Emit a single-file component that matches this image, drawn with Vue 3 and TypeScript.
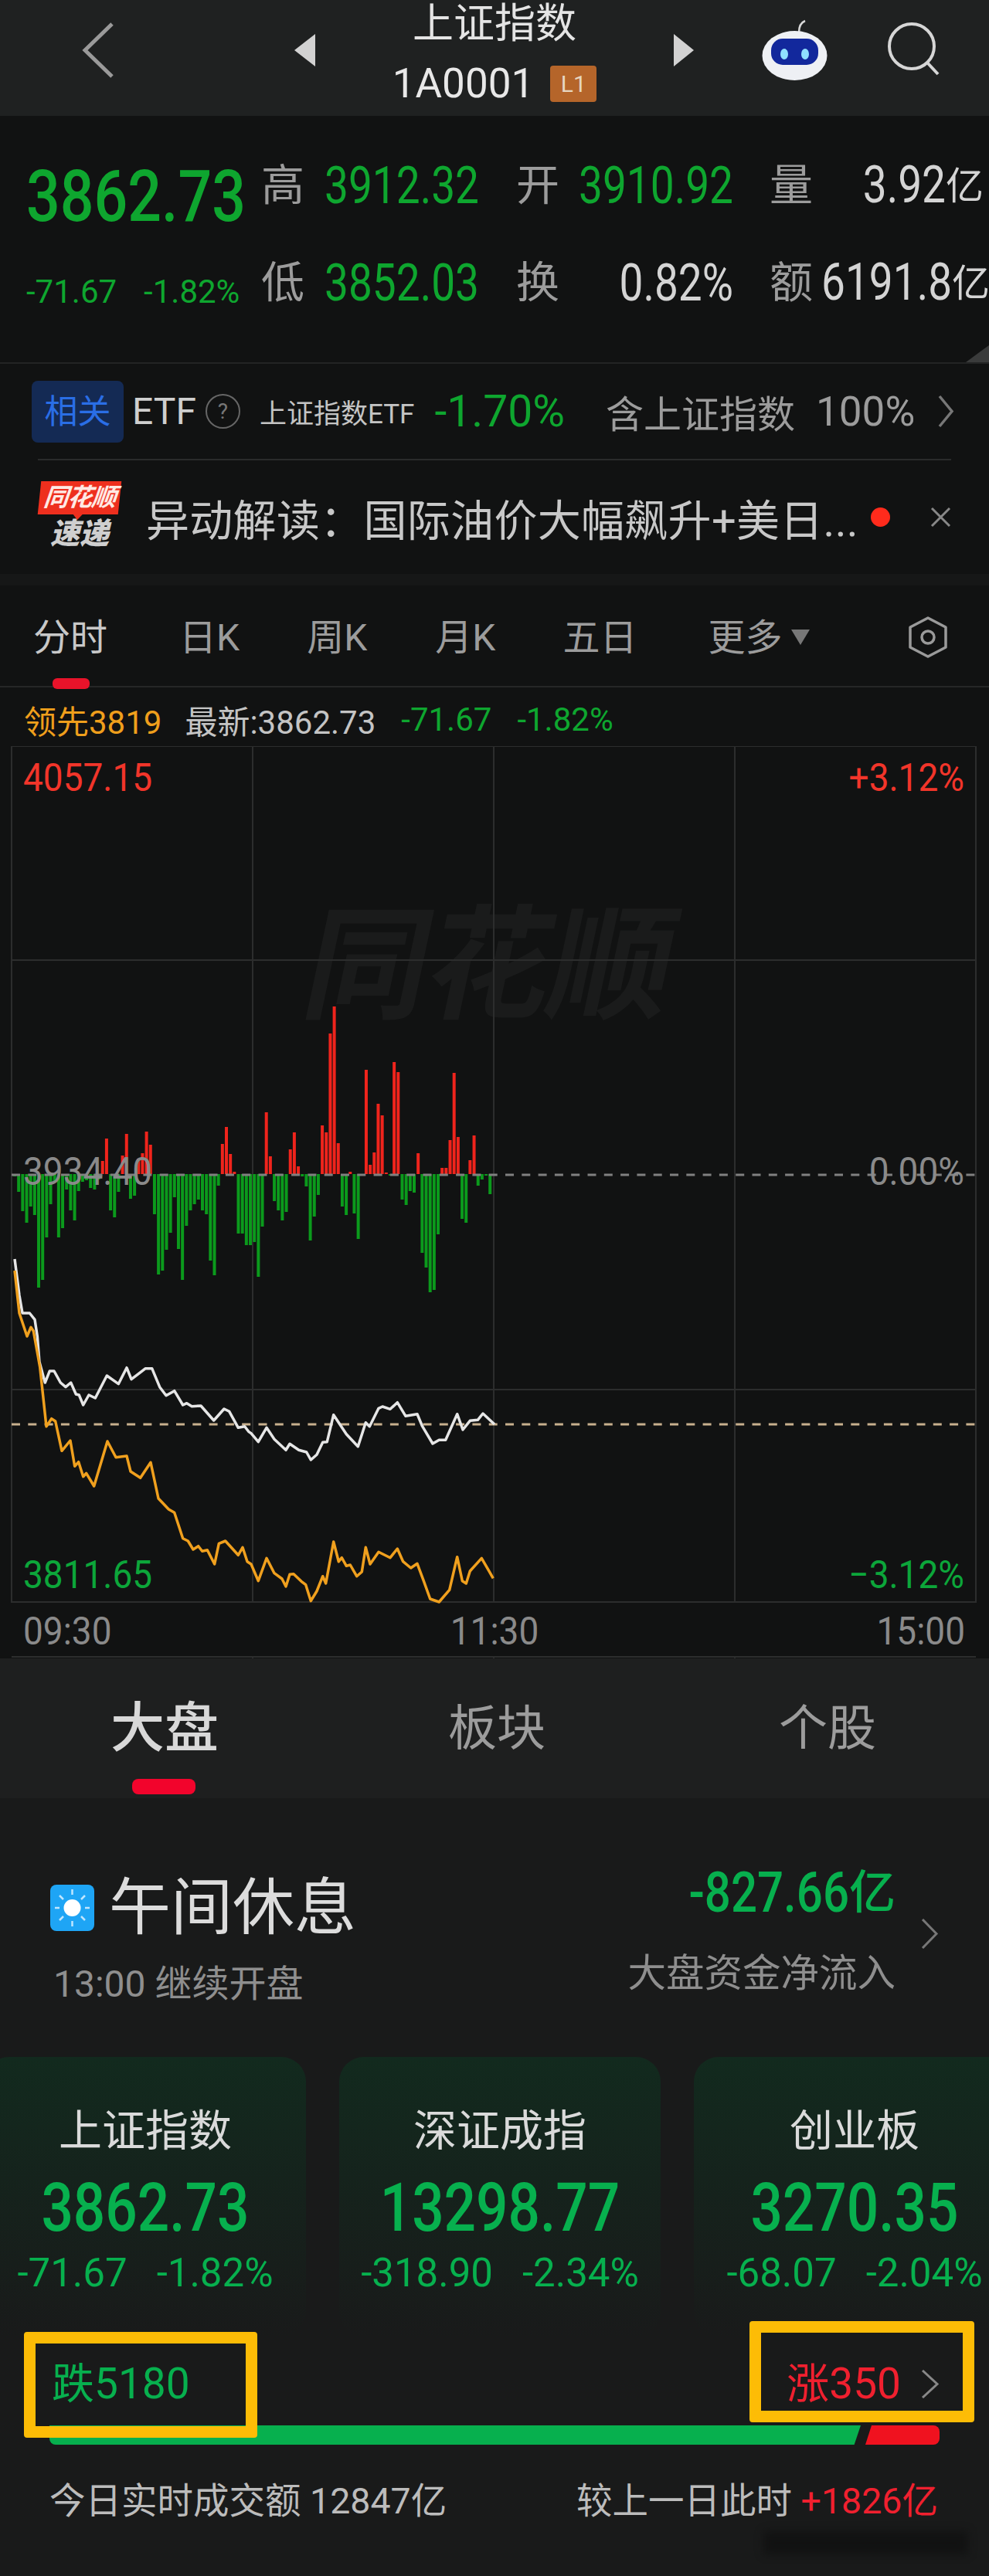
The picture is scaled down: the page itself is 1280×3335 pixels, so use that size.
<template>
  <div class="page">
    <!-- 顶部导航 -->
    <header class="nav">
      <svg class="nav-back" viewBox="0 0 43 74"><path d="M39 3 4 37l35 34" fill="none" stroke="#9a9a9a" stroke-width="5" /></svg>
      <i class="tri tri-left"></i>
      <div class="nav-title">
        <div class="nav-name">上证指数</div>
        <div class="nav-code"><span class="code-text">1A0001</span><span class="level">L1</span></div>
      </div>
      <i class="tri tri-right"></i>
      <svg class="nav-robot" viewBox="0 0 89 82">
        <path d="M50 20c0-8 3-13 8-15" fill="none" stroke="#d8d8d8" stroke-width="2.500" />
        <ellipse cx="44.500" cy="50" rx="42" ry="32" fill="#eef0f4" />
        <rect x="14" y="28" width="61" height="34" rx="15" fill="#12289c" />
        <ellipse cx="31" cy="48" rx="5" ry="7" fill="#8fe0ff" />
        <ellipse cx="58" cy="48" rx="5" ry="7" fill="#8fe0ff" />
      </svg>
      <svg class="nav-search" viewBox="0 0 70 70"><circle cx="33" cy="32" r="29" fill="none" stroke="#d6d6d6" stroke-width="4" /><path d="m53 53 14 15" stroke="#d6d6d6" stroke-width="4" /></svg>
    </header>

    <!-- 行情数据 -->
    <section class="quote">
      <div class="quote-grid">
        <div class="price"><span class="num">3862.73</span></div>
        <div class="q-label">高</div><div class="q-val green"><span class="num">3912.32</span></div>
        <div class="q-label">开</div><div class="q-val green"><span class="num">3910.92</span></div>
        <div class="q-label">量</div><div class="q-val light end"><span class="num">3.92</span><span class="yi">亿</span></div>
        <div class="change"><span>-71.67</span><span>-1.82%</span></div>
        <div class="q-label">低</div><div class="q-val green"><span class="num">3852.03</span></div>
        <div class="q-label">换</div><div class="q-val light turn"><span class="num">0.82%</span></div>
        <div class="q-label">额</div><div class="q-val light end"><span class="num">6191.8</span><span class="yi">亿</span></div>
      </div>
      <i class="corner"></i>
    </section>

    <div class="etf">
      <span class="etf-tag">相关</span>
      <span class="etf-name">ETF</span>
      <span class="etf-help">?</span>
      <span class="etf-fund">上证指数ETF</span>
      <span class="etf-rate">-1.70%</span>
      <span class="etf-hold">含上证指数</span>
      <span class="etf-pct">100%</span>
      <svg class="etf-more" viewBox="0 0 22 43"><path d="m3 2 16 19.500L3 41" fill="none" stroke="#777" stroke-width="3.500" /></svg>
    </div>
    <div class="hr"></div>

    <div class="news">
      <div class="logo">
        <div class="logo-top"><span>同花顺</span></div>
        <div class="logo-bottom">速递</div>
      </div>
      <div class="news-text">异动解读：国际油价大幅飙升+美日...</div>
      <i class="news-dot"></i>
      <svg class="news-close" viewBox="0 0 27 27"><path d="m2 2 23 23M25 2 2 25" stroke="#888" stroke-width="3" /></svg>
    </div>
    <div class="band"></div>

    <!-- 周期切换 -->
    <nav class="periods">
      <div class="period period-on">分时<i class="period-bar"></i></div>
      <div class="period p2">日K</div>
      <div class="period p3">周K</div>
      <div class="period p4">月K</div>
      <div class="period p5">五日</div>
      <div class="period p6">更多</div>
      <i class="period-tri"></i>
      <svg class="period-set" viewBox="0 0 54 54"><path d="M27 2 50 14v26L27 52 4 40V14Z" fill="none" stroke="#9a9a9a" stroke-width="3.500" stroke-linejoin="round" /><circle cx="27" cy="27" r="8" fill="none" stroke="#9a9a9a" stroke-width="3.500" /></svg>
    </nav>

    <div class="summary">
      <span class="s-lead">领先3819</span>
      <span class="s-last">最新:3862.73</span>
      <span class="s-chg">-71.67</span>
      <span class="s-pct">-1.82%</span>
    </div>

    <!-- 分时图，坐标直接用整页坐标 -->
    <svg class="chart" viewBox="0 966 1280 1181">
      <text class="mark" x="393" y="1306" textLength="475" transform="translate(271 0) skewX(-12)">同花顺</text>
      <g stroke="#2c2d2d" stroke-width="2" fill="none">
        <path d="M15 966H1263V2074H15Z" />
        <path d="M15 1243H1263M15 1799H1263M327 966V2074M639 966V2074M951 966V2074" />
        <path d="M15 2145H1263M327 2145V2147M639 2145V2147M951 2145V2147" />
      </g>
      <rect
        v-for="(b, i) in bars"
        :key="i"
        :x="b.x"
        :y="b.y"
        width="4"
        :height="b.h"
        :fill="b.up ? '#f0241c' : '#0b9a1c'"
      />
      <path d="M15 1521H1263" stroke="#808080" stroke-width="3" stroke-dasharray="11 10.300" />
      <path d="M15 1844H1263" stroke="#c8b08e" stroke-width="3" stroke-dasharray="11 10.300" />
      <polyline :points="whiteLine" fill="none" stroke="#e6e6e6" stroke-width="3.500" stroke-linejoin="round" />
      <polyline :points="orangeLine" fill="none" stroke="#f0a01e" stroke-width="3.500" stroke-linejoin="round" />
      <text class="axis red" x="30" y="1023">4057.15</text>
      <text class="axis red" x="1248" y="1023" text-anchor="end">+3.12%</text>
      <text class="axis gray" x="30" y="1533">3934.40</text>
      <text class="axis gray" x="1248" y="1533" text-anchor="end">0.00%</text>
      <text class="axis green" x="30" y="2055">3811.65</text>
      <text class="axis green" x="1248" y="2055" text-anchor="end">−3.12%</text>
      <text class="axis gray" x="30" y="2128">09:30</text>
      <text class="axis gray" x="640" y="2128" text-anchor="middle">11:30</text>
      <text class="axis gray" x="1249" y="2128" text-anchor="end">15:00</text>
    </svg>

    <!-- 大盘/板块/个股 -->
    <nav class="board-tabs">
      <div class="board-tab board-on">大盘<i class="board-bar"></i></div>
      <div class="board-tab b2">板块</div>
      <div class="board-tab b3">个股</div>
    </nav>

    <section class="market">
      <div class="status">
        <div>
          <div class="status-main">
            <svg class="sun" viewBox="0 0 57 60">
              <rect width="57" height="60" rx="8" fill="#1ea5f5" />
              <circle cx="28.500" cy="30" r="11" fill="#fff" />
              <path d="M28.500 6v7M28.500 47v7M6 30h6M45 30h6M12 14l5 5M40 41l5 5M45 14l-5 5M17 41l-5 5" stroke="#bfe6ff" stroke-width="2.500" />
            </svg>
            <span class="status-title">午间休息</span>
          </div>
          <div class="status-sub">13:00 继续开盘</div>
        </div>
        <div class="flow">
          <div class="flow-text">
            <div class="flow-num"><span class="num">-827.66</span>亿</div>
            <div class="flow-label">大盘资金净流入</div>
          </div>
          <svg class="flow-more" viewBox="0 0 23 39"><path d="m2 1 18 18.500L2 38" fill="none" stroke="#777" stroke-width="3" /></svg>
        </div>
      </div>

      <div class="cards">
        <div v-for="c in cards" :key="c.name" class="card">
          <div class="card-name">{{ c.name }}</div>
          <div class="card-val"><span class="num">{{ c.value }}</span></div>
          <div class="card-sub"><span>{{ c.change }}</span><span>{{ c.rate }}</span></div>
        </div>
      </div>

      <div class="breadth">
        <div class="breadth-row">
          <span class="fall">跌5180</span>
          <span class="rise">涨350<svg class="rise-more" viewBox="0 0 24 37"><path d="m2 1 19 17.500L2 36" fill="none" stroke="#888" stroke-width="3" /></svg></span>
        </div>
        <div class="bar">
          <i class="bar-green"></i>
          <i class="bar-red"></i>
        </div>
        <i class="hl hl-left"></i>
        <i class="hl hl-right"></i>
      </div>

      <div class="turnover">
        <span>今日实时成交额 12847亿</span>
        <span>较上一日此时 <b>+1826亿</b></span>
      </div>
      <i class="smudge"></i>
    </section>
  </div>
</template>

<script setup lang="ts">
interface Card {
  name: string
  value: string
  change: string
  rate: string
}

const cards: Card[] = [
  { name: '上证指数', value: '3862.73', change: '-71.67', rate: '-1.82%' },
  { name: '深证成指', value: '13298.77', change: '-318.90', rate: '-2.34%' },
  { name: '创业板', value: '3270.35', change: '-68.07', rate: '-2.04%' }
]

// 每分钟一根量柱，正数红负数绿
const flow: number[] = [
  -3, -23, -48, -63, -42, -53, -147, -137, -82, -39, -10, -82, -70, -20, -47, -60, -22, -10, -8, -18, -20,
  -7, 17, 46, -47, -56, -23, 24, 52, -32, -28, 20, 27, 55, 38, -52, -130, -125, -98, -76, -30, -97, -137,
  -67, -47, -39, -33, -47, -52, -112, -131, -15, 39, 61, 26, 3, -77, -77, -92, -92, -88, -133, -68, 80, 23,
  -35, -47, -60, -49, 32, 54, 10, -3, -16, -86, -55, -27, 63, 54, 182, 217, 40, -42, -53, 3, -51, -84, -2,
  135, 12, 28, 91, 76, 2, -2, 145, 132, -33, -40, -22, -24, 27, -102, -121, -153, -150, -78, 8, 8, 44, 131,
  48, -58, -63, 18, 50, -15, -7, -2, -26, -2
]

const ZERO_Y = 1520

const bars = flow.map((v, i) => ({
  x: 17 + 5.170 * i,
  y: v > 0 ? ZERO_Y - v : ZERO_Y,
  h: Math.abs(v),
  up: v > 0
}))

// 取点时的裁剪坐标是 3 倍，这里换算回整页坐标
function toPoints(pts: number[][], offsetX: number): string {
  return pts.map(([x, y]) => `${(offsetX + x / 3).toFixed(1)},${(1620 + y / 3).toFixed(1)}`).join(' ')
}

const whiteA = [[12,30],[30,170],[42,240],[70,240],[90,265],[100,330],[108,430],[130,510],[148,465],[165,465],[190,510],[210,527],[230,510],[250,555],[262,558],[278,597],[300,558],[325,570],[370,483],[415,515],[447,452],[465,497],[520,455],[545,455],[575,527],[600,560],[632,542],[665,597],[680,590],[700,602],[735,600],[785,657],[825,612],[845,622],[880,685],[905,680]]
const whiteB = [[-10,700],[0,707],[28,740],[60,685],[90,730],[135,772],[150,748],[185,772],[215,780],[232,810],[255,790],[278,742],[295,740],[320,635],[370,710],[415,758],[445,665],[460,680],[495,610],[510,603],[540,613],[568,587],[600,640],[645,632],[665,680],[705,747],[730,733],[755,733],[800,632],[822,693],[850,658],[880,655],[900,630],[945,672]]
const orangeA = [[12,75],[30,240],[60,330],[75,295],[85,310],[110,450],[135,680],[155,650],[170,660],[195,775],[228,735],[245,835],[260,818],[278,875],[290,862],[320,912],[372,738],[405,800],[447,795],[462,855],[500,880],[540,820],[570,960],[610,1002],[632,1015],[665,1115],[685,1125],[705,1158],[725,1145],[740,1165],[760,1160],[788,1215],[805,1135],[830,1125],[880,1180],[897,1150],[915,1205]]
const orangeB = [[0,1215],[28,1280],[60,1192],[90,1250],[120,1272],[135,1302],[150,1255],[165,1253],[195,1282],[212,1295],[232,1358],[255,1320],[278,1262],[290,1290],[320,1128],[340,1205],[352,1190],[370,1222],[385,1218],[410,1262],[430,1245],[445,1150],[462,1215],[495,1168],[540,1190],[568,1155],[590,1205],[620,1230],[645,1213],[670,1280],[695,1350],[730,1362],[770,1315],[800,1187],[820,1280],[835,1290],[850,1242],[895,1192],[940,1270]]

const whiteLine = `${toPoints(whiteA, 15)} ${toPoints(whiteB, 325)}`
const orangeLine = `${toPoints(orangeA, 15)} ${toPoints(orangeB, 325)}`
</script>

<style>
body {
  background: #191a1a;
}
</style>

<style scoped>
.page {
  width: 1280px;
  height: 3335px;
  overflow: hidden;
  background: #111212;
  font-family: Roboto, "Noto Sans CJK SC", sans-serif;
  color: #ddd;
}

.num {
  display: inline-block;
  transform: scaleY(1.2);
}

.green {
  color: #0ea62f;
}

.light {
  color: #d4d4d4;
}

/* 顶部导航 */
.nav {
  height: 150px;
  background: #1f2121;
  display: flex;
  align-items: center;
}

.nav-back {
  width: 43px;
  height: 74px;
  margin-left: 106px;
  margin-top: -20px;
}

.tri {
  width: 0;
  height: 0;
  margin-top: -20px;
  border-top: 21px solid transparent;
  border-bottom: 21px solid transparent;
}

.tri-left {
  margin-left: 232px;
  border-right: 27px solid #d2d2d2;
}

.tri-right {
  border-left: 26px solid #d2d2d2;
}

.nav-title {
  width: 464px;
  height: 150px;
  display: flex;
  flex-direction: column;
  align-items: center;
}

.nav-name {
  font-size: 53px;
  line-height: 62px;
  color: #e4e4e4;
}

.nav-code {
  display: flex;
  align-items: center;
  gap: 21px;
  margin-top: 22px;
  height: 48px;
}

.code-text {
  font-size: 53px;
  color: #e8e8e8;
}

.level {
  width: 60px;
  height: 47px;
  border-radius: 4px;
  background: #b5652a;
  color: #e6d6c0;
  font-size: 30px;
  line-height: 47px;
  text-align: center;
}

.nav-robot {
  width: 89px;
  height: 82px;
  margin-left: 86px;
  margin-top: -24px;
}

.nav-search {
  width: 70px;
  height: 70px;
  margin-left: 74px;
  margin-top: -24px;
}

/* 行情数据 */
.quote {
  position: relative;
  height: 321px;
  border-bottom: 2px solid #232424;
  box-sizing: border-box;
}

.quote-grid {
  display: grid;
  grid-template-columns: 304px 82px 248px 81px 247px 67px 210px;
  grid-auto-rows: 100px;
  row-gap: 26px;
  padding: 40px 0 0 34px;
  align-items: center;
}

.price {
  font-size: 77px;
  font-weight: 500;
  color: #0ea62f;
  line-height: 1;
  margin-top: 30px;
}

.q-label {
  font-size: 56px;
  line-height: 64px;
  color: #9c9c9c;
}

.q-val {
  font-size: 55px;
  line-height: 64px;
  white-space: nowrap;
}

.end {
  text-align: right;
}

.turn {
  text-align: right;
  padding-right: 47px;
}

.yi {
  font-size: 49px;
}

.change {
  display: flex;
  gap: 35px;
  color: #0ea62f;
  font-size: 42px;
  margin-top: 22px;
}

.corner {
  position: absolute;
  right: 0;
  bottom: 0;
  width: 0;
  height: 0;
  border-left: 30px solid transparent;
  border-bottom: 22px solid #3a3b3b;
}

/* ETF */
.etf {
  height: 123px;
  display: flex;
  align-items: center;
  padding-left: 41px;
}

.etf-tag {
  width: 119px;
  height: 80px;
  border-radius: 8px;
  background: #142a54;
  color: #2a6ee6;
  font-size: 43px;
  line-height: 80px;
  text-align: center;
}

.etf-name {
  margin-left: 11px;
  font-size: 48px;
  color: #cfcfcf;
}

.etf-help {
  width: 41px;
  height: 41px;
  margin-left: 12px;
  border: 2px solid #666;
  border-radius: 50%;
  color: #777;
  font-size: 28px;
  line-height: 41px;
  text-align: center;
}

.etf-fund {
  margin-left: 25px;
  font-size: 35px;
  color: #c4c4c4;
  white-space: nowrap;
}

.etf-rate {
  margin-left: 26px;
  font-size: 57px;
  color: #0ea62f;
}

.etf-hold {
  margin-left: 53px;
  font-size: 49px;
  color: #9c9c9c;
}

.etf-pct {
  margin-left: 27px;
  font-size: 53px;
  color: #9c9c9c;
}

.etf-more {
  width: 22px;
  height: 43px;
  margin-left: 29px;
}

.hr {
  height: 2px;
  margin: 0 49px;
  background: #2a2b2b;
}

/* 快讯 */
.news {
  height: 147px;
  display: flex;
  align-items: center;
  padding-left: 51px;
}

.logo {
  width: 104px;
  margin-top: -6px;
}

.logo-top {
  position: relative;
  height: 43px;
  background: #ee2f1e;
  transform: skewX(-6deg);
  text-align: center;
  color: #ffe9e4;
  font-size: 32px;
  font-weight: 700;
  font-style: italic;
  line-height: 43px;
  letter-spacing: -1px;
}

.logo-top::after {
  content: '';
  position: absolute;
  left: 46px;
  top: 43px;
  border: 6px solid transparent;
  border-top: 7px solid #ee2f1e;
}

.logo-bottom {
  margin-top: 6px;
  text-align: center;
  color: #cfcfcf;
  font-size: 38px;
  line-height: 38px;
  font-weight: 900;
  font-style: italic;
}

.news-text {
  width: 936px;
  margin-left: 34px;
  font-size: 56px;
  letter-spacing: 0.300px;
  color: #c8c8c8;
  white-space: nowrap;
}

.news-dot {
  width: 25px;
  height: 25px;
  margin-left: 2px;
  border-radius: 50%;
  background: #ff2b1c;
}

.news-close {
  width: 27px;
  height: 27px;
  margin-left: 52px;
}

.band {
  height: 15px;
  background: #161717;
}

/* 周期切换 */
.periods {
  height: 132px;
  box-sizing: border-box;
  border-bottom: 2px solid #262727;
  padding: 36px 0 0 43px;
  display: flex;
  align-items: flex-start;
}

.period {
  position: relative;
  font-size: 48px;
  line-height: 64px;
  color: #9c9c9c;
  white-space: nowrap;
}

.period-on {
  width: 96px;
  color: #c8c8c8;
}

.period-bar {
  position: absolute;
  left: 25px;
  top: 84px;
  width: 48px;
  height: 14px;
  border-radius: 6px;
  background: #e8132a;
}

.p2 { margin-left: 93px; }
.p3 { margin-left: 87px; }
.p4 { margin-left: 88px; }
.p5 { margin-left: 87px; }
.p6 { margin-left: 92px; }

.period-tri {
  margin: 21px 0 0 12px;
  border-left: 12px solid transparent;
  border-right: 12px solid transparent;
  border-top: 20px solid #777;
}

.period-set {
  width: 54px;
  height: 54px;
  margin: 4px 0 0 126px;
}

.summary {
  height: 76px;
  box-sizing: border-box;
  padding: 6px 0 0 31px;
  display: flex;
  align-items: center;
  font-size: 42px;
  white-space: nowrap;
}

.s-lead { color: #ef9f1c; }
.s-last { margin-left: 30px; color: #c4c4c4; }
.s-chg { margin-left: 33px; color: #0ea62f; }
.s-pct { margin-left: 33px; color: #0ea62f; }

/* 分时图 */
.chart {
  display: block;
  width: 1280px;
  height: 1181px;
}

.mark {
  font-size: 160px;
  font-weight: 700;
  fill: #1a1b1b;
}

.axis {
  font-size: 46px;
  transform-box: fill-box;
  transform-origin: center;
  transform: scaleY(1.08);
}

.axis.red { fill: #f2352a; }
.axis.green { fill: #0ca63a; }
.axis.gray { fill: #8a8a8a; }

/* 大盘/板块/个股 */
.board-tabs {
  height: 181px;
  background: #1e1f1f;
  display: flex;
  align-items: flex-start;
  padding: 56px 0 0 143px;
  box-sizing: border-box;
}

.board-tab {
  position: relative;
  font-size: 63px;
  line-height: 70px;
  color: #9c9c9c;
}

.board-on {
  font-size: 70px;
  font-weight: 500;
  color: #d8d8d8;
}

.board-bar {
  position: absolute;
  left: 28px;
  top: 100px;
  width: 82px;
  height: 20px;
  border-radius: 8px;
  background: #f2042c;
}

.b2 { margin-left: 297px; }
.b3 { margin-left: 302px; }

/* 市场概览 */
.market {
  position: relative;
  height: 1007px;
  background: #191a1a;
}

.status {
  height: 335px;
  box-sizing: border-box;
  padding: 100px 65px 0;
  display: flex;
  justify-content: space-between;
}

.status-main {
  display: flex;
  align-items: center;
  gap: 19px;
}

.sun {
  width: 57px;
  height: 60px;
}

.status-title {
  font-size: 80px;
  line-height: 84px;
  color: #dcdcdc;
}

.status-sub {
  margin: 27px 0 0 4px;
  font-size: 48px;
  line-height: 60px;
  color: #8e8e8e;
}

.flow {
  display: flex;
  align-items: center;
  height: 150px;
}

.flow-text {
  text-align: right;
}

.flow-num {
  font-size: 60px;
  line-height: 60px;
  font-weight: 500;
  color: #07b04e;
}

.flow-label {
  margin-top: 44px;
  font-size: 49.500px;
  line-height: 60px;
  color: #8e8e8e;
}

.flow-more {
  width: 23px;
  height: 39px;
  margin-left: 33px;
}

.cards {
  display: flex;
  gap: 43px;
  margin-left: -20px;
}

.card {
  flex: none;
  width: 416px;
  height: 362px;
  box-sizing: border-box;
  padding-top: 65px;
  border-radius: 32px;
  background: linear-gradient(#122a1e, #191a1a);
  text-align: center;
  white-space: nowrap;
}

.card-name {
  font-size: 56px;
  line-height: 62px;
  color: #dadada;
}

.card-val {
  margin-top: 33px;
  font-size: 73px;
  line-height: 70px;
  font-weight: 500;
  color: #07b04e;
}

.card-sub {
  display: flex;
  justify-content: center;
  gap: 38px;
  margin-top: 25px;
  font-size: 51px;
  line-height: 50px;
  color: #07b04e;
}

.card-sub span {
  display: inline-block;
}

.breadth {
  position: relative;
  padding: 31px 64px 0 67px;
}

.breadth-row {
  display: flex;
  justify-content: space-between;
  height: 60px;
  font-size: 55px;
  line-height: 60px;
}

.fall {
  color: #07b04e;
}

.rise {
  display: flex;
  align-items: center;
  color: #f0202f;
}

.rise-more {
  width: 24px;
  height: 37px;
  margin-left: 26px;
}

.bar {
  display: flex;
  height: 25px;
  margin: 24px 0 0 -3px;
}

.bar-green {
  width: 1050px;
  background: #07b04e;
  border-radius: 0 0 0 8px;
  clip-path: polygon(0 0, 100% 0, 99.200% 100%, 0 100%);
}

.bar-red {
  flex: 1;
  margin-left: 6px;
  background: #f0121f;
  border-radius: 0 8px 8px 0;
  clip-path: polygon(8px 0, 100% 0, 100% 100%, 0 100%);
}

/* 截图上加的黄色标注框 */
.hl {
  position: absolute;
  box-sizing: border-box;
  border: 15px solid #fdbc06;
  border-radius: 4px;
}

.hl-left {
  left: 31px;
  top: -6px;
  width: 302px;
  height: 137px;
}

.hl-right {
  left: 970px;
  top: -20px;
  width: 291px;
  height: 131px;
}

.turnover {
  display: flex;
  justify-content: space-between;
  margin-top: 48px;
  padding: 0 66px 0 64px;
  font-size: 46.500px;
  line-height: 50px;
  color: #bcbcbc;
}

.turnover b {
  font-weight: 400;
  color: #f0202f;
}

.smudge {
  position: absolute;
  right: 27px;
  bottom: 28px;
  width: 265px;
  height: 30px;
  background: #0a0a0a;
  opacity: 0.5;
  filter: blur(6px);
}
</style>
